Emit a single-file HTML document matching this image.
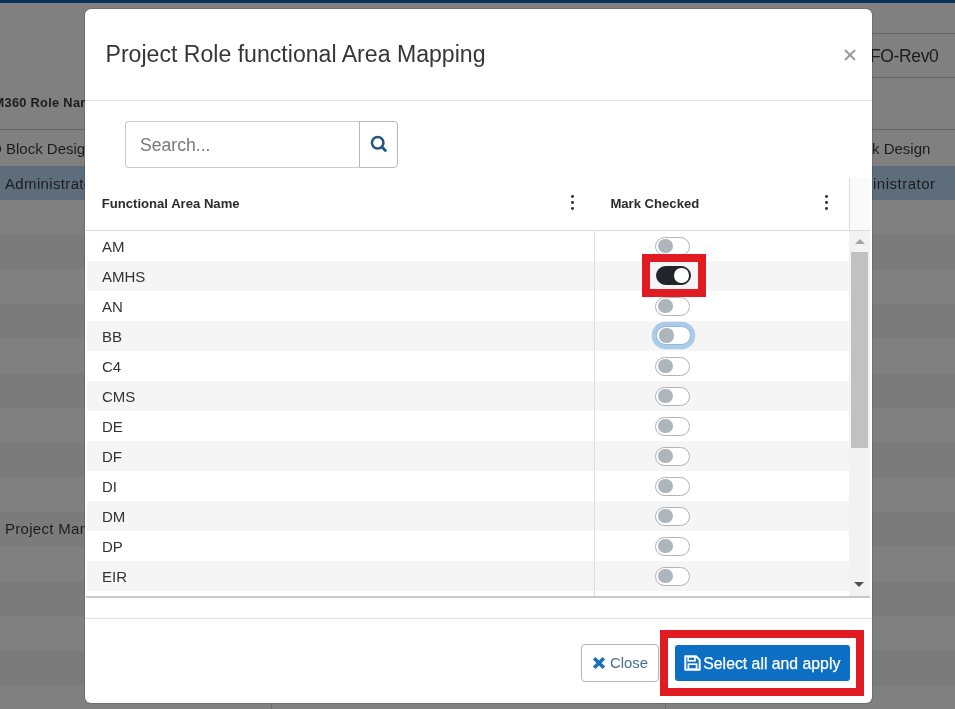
<!DOCTYPE html>
<html lang="en">
<head>
<meta charset="utf-8">
<title>Project Role functional Area Mapping</title>
<style>
*{box-sizing:border-box;margin:0;padding:0}
html,body{width:955px;height:709px;overflow:hidden}
body{position:relative;background:#808080;font-family:"Liberation Sans","DejaVu Sans",sans-serif;color:#333}
.abs{position:absolute}
/* ---------- dimmed background page ---------- */
#bg{will-change:transform;position:absolute;left:0;top:0;width:955px;height:709px;overflow:hidden}
#bg .nav{position:absolute;left:0;top:0;width:955px;height:3px;background:#0b3257}
#bg .stripe{position:absolute;left:0;width:955px;height:34.7px;background:#7b7b7b}
#bg .sel{position:absolute;left:0;top:165.6px;width:955px;height:34px;background:#5d6d7c}
#bg .hl{position:absolute;height:1px;background:#666}
#bg .vl{position:absolute;width:1px;background:#6c6c6c}
#bg .t{position:absolute;white-space:nowrap;color:#1c1c1c;line-height:1}
/* ---------- modal ---------- */
#modal{will-change:transform;position:absolute;left:85px;top:9px;width:787px;height:694px;background:#fff;border-radius:6px;box-shadow:0 0 0 1px rgba(0,0,0,.12)}
#modal .title{position:absolute;left:20.5px;top:30.8px;font-size:23.1px;line-height:28px;color:#363636;white-space:nowrap}
#modal .x{position:absolute;left:758px;top:39px;width:14px;height:14px}
#modal .hb{position:absolute;left:0;top:91px;width:787px;height:1px;background:#e1e2e4}
#modal .fb{position:absolute;left:0;top:609px;width:787px;height:1px;background:#e1e2e4}
/* search */
.search{position:absolute;left:40px;top:112px;width:234px;height:47px;border:1px solid #ccc;border-right:0;border-radius:4px 0 0 4px;font-size:17.6px;color:#787878;padding:0 0 0 14px;line-height:47px;white-space:nowrap}
.sbtn{position:absolute;left:274px;top:112px;width:39px;height:47px;border:1px solid #b8b8b8;border-radius:0 4px 4px 0;background:#fff}
.sbtn svg{position:absolute;left:8px;top:12px}
/* grid */
#grid{position:absolute;left:1px;top:169px;width:784px;height:420px}
#grid .head{position:absolute;left:0;top:0;width:784px;height:53px;border-bottom:1px solid #d9d9d9}
#grid .head .pad{position:absolute;left:763px;top:0;width:21px;height:52px;background:#fafafa;border-left:1px solid #dcdcdc}
#grid .th{position:absolute;top:18px;margin-left:-1.2px;font-size:13.1px;font-weight:bold;color:#2b2b2b;line-height:16px;white-space:nowrap}
#grid .kebab{position:absolute;top:16.6px;width:4px;height:18px}
#grid .kebab i{position:absolute;left:0;width:3.5px;height:3.5px;border-radius:40%;background:#333}
#grid .body{position:absolute;left:0;top:53px;width:784px;height:367px;overflow:hidden;border-bottom:2px solid #c9c9c9}
.row{position:absolute;left:1px;width:764px;height:30px}
.row.alt{background:#f5f5f5}
.row span{position:absolute;left:15px;top:0;line-height:31px;font-size:15px;color:#333}
.coldiv{position:absolute;left:508px;top:0;width:1px;height:367px;background:#dcdcdc}
.sw{position:absolute;left:569px;width:35px;height:19px;border:1px solid #b3b3b3;border-radius:10px;background:#fff}
.sw i{position:absolute;left:2px;top:1.3px;width:14.5px;height:14.5px;border-radius:50%;background:#adb5bd}
.sw.on{background:#212529;border-color:#212529;margin-left:1px;margin-top:-.5px}
.sw.on i{left:17px;background:#fff}
.sw.focus{border-color:#8bbbe0;box-shadow:0 0 0 4.3px #abcce8;margin-left:1px;margin-top:-.5px}
.redbox{position:absolute;border:8px solid #e11b22}
/* scrollbar */
.sb{position:absolute;left:763px;top:0;width:20.5px;height:365px;background:#f2f2f2}
.sb .thumb{position:absolute;left:2px;top:21px;width:17px;height:196px;background:#c1c1c1}
.sb .up{position:absolute;left:5.5px;top:8px;width:0;height:0;border:5px solid transparent;border-top:0;border-bottom:5px solid #a3a3a3}
.sb .dn{position:absolute;left:5px;top:351px;width:0;height:0;border:5px solid transparent;border-bottom:0;border-top:5px solid #505050}
/* footer buttons */
.btn-close{position:absolute;left:496.3px;top:635.3px;width:77.7px;height:38px;border:1px solid #b5b5b5;border-radius:4px;background:#fff;color:#44708f;font-size:14.9px;line-height:37px;white-space:nowrap}
.btn-close svg{position:absolute;left:9.7px;top:11px}
.btn-close span{position:absolute;left:27.7px;top:0}
.btn-apply{position:absolute;left:590px;top:636px;width:175px;height:36px;border-radius:3px;background:#0c6fc3;color:#fff;font-size:15.8px;line-height:36px;white-space:nowrap}
.btn-apply svg{position:absolute;left:9.3px;top:9.6px}
.btn-apply span{position:absolute;left:28.3px;top:1px;-webkit-text-stroke:.25px #fff}
</style>
</head>
<body>
<div id="bg">
  <div class="nav"></div>
  <div class="stripe" style="top:234.3px"></div>
  <div class="stripe" style="top:303.7px"></div>
  <div class="stripe" style="top:373.1px"></div>
  <div class="stripe" style="top:442.5px"></div>
  <div class="stripe" style="top:511.9px"></div>
  <div class="stripe" style="top:581.3px"></div>
  <div class="stripe" style="top:650.7px"></div>
  <div class="sel"></div>
  <div class="hl" style="left:0;top:129px;width:955px"></div>
  <div class="hl" style="left:860px;top:33px;width:95px"></div>
  <div class="hl" style="left:860px;top:77px;width:95px"></div>
  <div class="vl" style="left:271px;top:130px;height:579px"></div>
  <div class="vl" style="left:665px;top:130px;height:579px"></div>
  <div class="t" style="left:-6.5px;top:96.8px;font-size:12.8px;font-weight:bold;letter-spacing:.3px">M360 Role Name</div>
  <div class="t" style="left:-9px;top:141px;font-size:15px">D Block Design</div>
  <div class="t" style="left:5px;top:176px;font-size:15px;letter-spacing:.35px">Administrator</div>
  <div class="t" style="left:5px;top:520.8px;font-size:15px;letter-spacing:.3px">Project Manager</div>
  <div class="t" style="left:870px;top:47.6px;font-size:17.5px;letter-spacing:-.37px">FO-Rev0</div>
  <div class="t" style="left:872px;top:141px;font-size:15px">k Design</div>
  <div class="t" style="left:873px;top:176px;font-size:15px;letter-spacing:.5px">inistrator</div>
</div>
<div id="modal">
  <div class="title">Project Role functional Area Mapping</div>
  <svg class="x" viewBox="0 0 14 14"><path d="M2 2 L12 12 M12 2 L2 12" stroke="#9b9b9b" stroke-width="2" fill="none"/></svg>
  <div class="hb"></div>
  <div class="search">Search...</div>
  <div class="sbtn"><svg width="20" height="20" viewBox="0 0 20 20"><circle cx="9.7" cy="8.8" r="5.75" fill="none" stroke="#1f5581" stroke-width="2.5"/><path d="M14 13.1 L17.4 16.5" stroke="#1f5581" stroke-width="2.8" stroke-linecap="round"/></svg></div>
  <div id="grid">
    <div class="head">
      <div class="th" style="left:17px">Functional Area Name</div>
      <div class="kebab" style="left:484.7px"><i style="top:0"></i><i style="top:6.2px"></i><i style="top:12.4px"></i></div>
      <div class="th" style="left:525.6px">Mark Checked</div>
      <div class="kebab" style="left:738.8px"><i style="top:0"></i><i style="top:6.2px"></i><i style="top:12.4px"></i></div>
      <div class="pad"></div>
    </div>
    <div class="body" id="gbody">
      <div class="row" style="top:0px"><span>AM</span></div>
      <div class="row alt" style="top:30px"><span>AMHS</span></div>
      <div class="row" style="top:60px"><span>AN</span></div>
      <div class="row alt" style="top:90px"><span>BB</span></div>
      <div class="row" style="top:120px"><span>C4</span></div>
      <div class="row alt" style="top:150px"><span>CMS</span></div>
      <div class="row" style="top:180px"><span>DE</span></div>
      <div class="row alt" style="top:210px"><span>DF</span></div>
      <div class="row" style="top:240px"><span>DI</span></div>
      <div class="row alt" style="top:270px"><span>DM</span></div>
      <div class="row" style="top:300px"><span>DP</span></div>
      <div class="row alt" style="top:330px"><span>EIR</span></div>
      <div class="row" style="top:360px"><span>EM</span></div>
      <div class="coldiv"></div>
      <div class="sw" style="top:5.5px"><i></i></div>
      <div class="sw on" style="top:35.5px"><i></i></div>
      <div class="sw" style="top:65.5px"><i></i></div>
      <div class="sw focus" style="top:95.5px"><i></i></div>
      <div class="sw" style="top:125.5px"><i></i></div>
      <div class="sw" style="top:155.5px"><i></i></div>
      <div class="sw" style="top:185.5px"><i></i></div>
      <div class="sw" style="top:215.5px"><i></i></div>
      <div class="sw" style="top:245.5px"><i></i></div>
      <div class="sw" style="top:275.5px"><i></i></div>
      <div class="sw" style="top:305.5px"><i></i></div>
      <div class="sw" style="top:335.5px"><i></i></div>
      <div class="sw" style="top:365.5px"><i></i></div>
      <div class="redbox" style="left:556px;top:23px;width:64px;height:43px"></div>
      <div class="sb"><div class="up"></div><div class="thumb"></div><div class="dn"></div></div>
    </div>
  </div>
  <div class="fb"></div>
  <div class="btn-close"><svg width="14" height="14" viewBox="0 0 14 14"><path d="M2.2 2.2 L11.8 11.8 M11.8 2.2 L2.2 11.8" stroke="#1b70bd" stroke-width="3.7" fill="none"/></svg><span>Close</span></div>
  <div class="redbox" style="left:575px;top:621px;width:204px;height:66px"></div>
  <div class="btn-apply"><svg width="17" height="16" viewBox="0 0 17 16"><path d="M1.3 1.3 H12 L15.7 5 V14.7 H1.3 Z" fill="none" stroke="#fff" stroke-width="2" stroke-linejoin="round"/><rect x="4.2" y="1.8" width="6.8" height="4" fill="none" stroke="#fff" stroke-width="1.7"/><rect x="4.4" y="9.2" width="8.2" height="5" fill="none" stroke="#fff" stroke-width="1.7"/></svg><span>Select all and apply</span></div>
</div>
</body>
</html>
